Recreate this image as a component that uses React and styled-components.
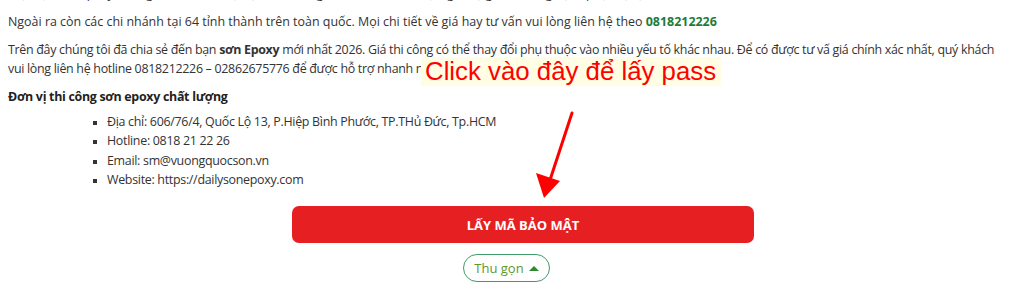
import React from "react";
import styled, { createGlobalStyle } from "styled-components";

const GlobalStyle = createGlobalStyle`
  body {
    margin: 0;
    background: #fff;
    font-family: "Open Sans", "Noto Sans", sans-serif;
    color: #333;
    overflow: hidden;
  }
`;

const Page = styled.div`
  position: relative;
  padding: 0 8px;
  margin-top: -16px;
  width: 1014px;
  box-sizing: border-box;
`;

const Para = styled.p`
  margin: 0 0 9px;
  font-size: 12.45px;
  line-height: 19px;
  letter-spacing: ${(p) => p.$spacing ?? -0.3}px;
`;

const Heading = styled.p`
  margin: 0;
  font-size: 12.45px;
  line-height: 19px;
  font-weight: 700;
  letter-spacing: -0.3px;
  color: #222;
`;

const Phone = styled.strong`
  color: #1b7d3b;
`;

const List = styled.ul`
  margin: 6px 0 0;
  padding-left: 99px;
  list-style: square;
  font-size: 12.45px;
  line-height: 19.3px;
  letter-spacing: -0.3px;

  li::marker {
    font-size: 10px;
    color: #333;
  }
`;

const Actions = styled.div`
  display: flex;
  flex-direction: column;
  align-items: flex-start;
  margin-top: 17px;
`;

const SecureButton = styled.button`
  margin-left: 284px;
  width: 462px;
  height: 37px;
  border: none;
  border-radius: 7px;
  background: #e62022;
  color: #fff;
  font-family: "Open Sans", sans-serif;
  font-size: 13px;
  font-weight: 700;
  cursor: pointer;
`;

const CollapseButton = styled.button`
  margin: 11px 0 0 455px;
  height: 28px;
  width: 87px;
  border: 1px solid #3f9a6b;
  border-radius: 14px;
  background: #fff;
  color: #5a9a2c;
  font-family: "Open Sans", sans-serif;
  font-size: 13px;
  display: flex;
  align-items: center;
  justify-content: center;
  gap: 5px;
  padding: 0;
`;

const Caret = styled.span`
  width: 0;
  height: 0;
  border-left: 5px solid transparent;
  border-right: 5px solid transparent;
  border-bottom: 5px solid #2f8a2f;
`;

const Callout = styled.div`
  position: absolute;
  left: 421px;
  top: 73px;
  padding: 1px 5px 1px 4px;
  background: #fffde3;
  color: #ff0000;
  font-family: "Liberation Sans", Arial, sans-serif;
  font-size: 25.8px;
  line-height: 27px;
  white-space: nowrap;
`;

const Arrow = styled.svg`
  position: absolute;
  left: 530px;
  top: 124px;
`;

export default function App() {
  return (
    <>
      <GlobalStyle />
      <Page>
        <Para>
          Hiện tại, Sơn Epoxy Vương Quốc đã có mặt tại nhiều công trình lớn nhỏ với đội ngũ thợ giàu kinh nghiệm, phục vụ tận tâm
        </Para>
        <Para $spacing={0}>
          Ngoài ra còn các chi nhánh tại 64 tỉnh thành trên toàn quốc. Mọi chi tiết về giá hay tư vấn vui lòng liên hệ theo{" "}
          <Phone>0818212226</Phone>
        </Para>
        <Para>
          Trên đây chúng tôi đã chia sẻ đến bạn <strong>sơn Epoxy</strong> mới nhất 2026. Giá thi công có thể thay đổi phụ thuộc vào nhiều yếu tố khác nhau. Để có được tư vấ giá chính xác nhất, quý khách vui lòng liên hệ hotline 0818212226 – 02862675776 để được hỗ trợ nhanh nhất.
        </Para>
        <Heading>Đơn vị thi công sơn epoxy chất lượng</Heading>
        <List>
          <li>Địa chỉ: 606/76/4, Quốc Lộ 13, P.Hiệp Bình Phước, TP.THủ Đức, Tp.HCM</li>
          <li>Hotline: 0818 21 22 26</li>
          <li>Email: sm@vuongquocson.vn</li>
          <li>Website: https://dailysonepoxy.com</li>
        </List>
        <Actions>
          <SecureButton>LẤY MÃ BẢO MẬT</SecureButton>
          <CollapseButton>
            Thu gọn <Caret />
          </CollapseButton>
        </Actions>
        <Callout>Click vào đây để lấy pass</Callout>
        <Arrow width="50" height="92" viewBox="0 0 50 92">
          <line x1="42" y1="5" x2="20" y2="72" stroke="#ff0000" strokeWidth="3" strokeLinecap="round" />
          <polygon points="6,65 30,73 14,90" fill="#ff0000" />
        </Arrow>
      </Page>
    </>
  );
}
